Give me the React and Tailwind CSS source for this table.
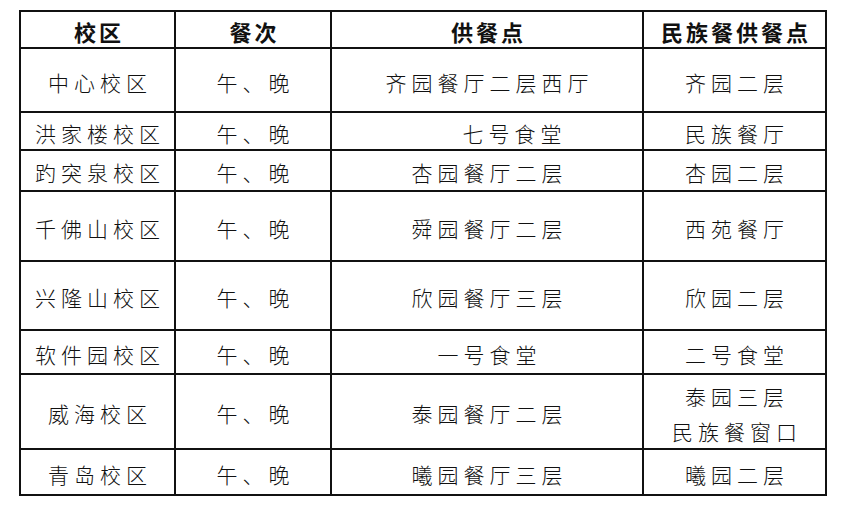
const rows = [
  { campus: "中心校区", h: "h-[64px]", place: "齐园餐厅二层西厅", minzu: ["齐园二层"] },
  { campus: "洪家楼校区", h: "h-[38px]", place: "七号食堂", minzu: ["民族餐厅"], shift: true },
  { campus: "趵突泉校区", h: "h-[41px]", place: "杏园餐厅二层", minzu: ["杏园二层"] },
  { campus: "千佛山校区", h: "h-[70px]", place: "舜园餐厅二层", minzu: ["西苑餐厅"] },
  { campus: "兴隆山校区", h: "h-[69px]", place: "欣园餐厅三层", minzu: ["欣园二层"] },
  { campus: "软件园校区", h: "h-[44px]", place: "一号食堂", minzu: ["二号食堂"] },
  { campus: "威海校区", h: "h-[75px]", place: "泰园餐厅二层", minzu: ["泰园三层", "民族餐窗口"] },
  { campus: "青岛校区", h: "h-[46px]", place: "曦园餐厅三层", minzu: ["曦园二层"] },
];

export default function App() {
  return (
    <div className="w-[842px] h-[505px] bg-white pt-[10px] pl-[19px] text-[#111]"
      style={{ fontFamily: '"Noto Sans CJK SC", "Noto Sans", sans-serif' }}>
      <table className="table-fixed border-collapse w-[806px]">
        <colgroup>
          <col className="w-[155px]" />
          <col className="w-[156px]" />
          <col className="w-[312px]" />
          <col className="w-[183px]" />
        </colgroup>
        <thead>
          <tr className="h-[37px]">
            {["校区", "餐次", "供餐点", "民族餐供餐点"].map((t) => (
              <th key={t} className="border-2 border-[#111] p-0 pl-[3px] pt-[3px] text-[22px] leading-none font-semibold tracking-[3px] text-center">
                {t}
              </th>
            ))}
          </tr>
        </thead>
        <tbody>
          {rows.map((r) => (
            <tr key={r.campus} className={r.h}>
              <td className="border-2 border-[#111] p-0 pl-[5px] pt-[4px] text-[21px] leading-none font-light tracking-[5px] text-center">
                {r.campus}
              </td>
              <td className="border-2 border-[#111] p-0 pl-[5px] pt-[4px] text-[21px] leading-none font-light tracking-[5px] text-center">
                午、晚
              </td>
              <td className={"border-2 border-[#111] p-0 pt-[4px] text-[21px] leading-none font-light tracking-[5px] text-center " + (r.shift ? "pl-[55px]" : "pl-[5px]")}>
                {r.place}
              </td>
              <td className="border-2 border-[#111] p-0 pl-[5px] pt-[4px] text-[21px] leading-none font-light tracking-[5px] text-center">
                <div className="flex flex-col items-center gap-[14px]">
                  {r.minzu.map((m) => (
                    <span key={m}>{m}</span>
                  ))}
                </div>
              </td>
            </tr>
          ))}
        </tbody>
      </table>
    </div>
  );
}
